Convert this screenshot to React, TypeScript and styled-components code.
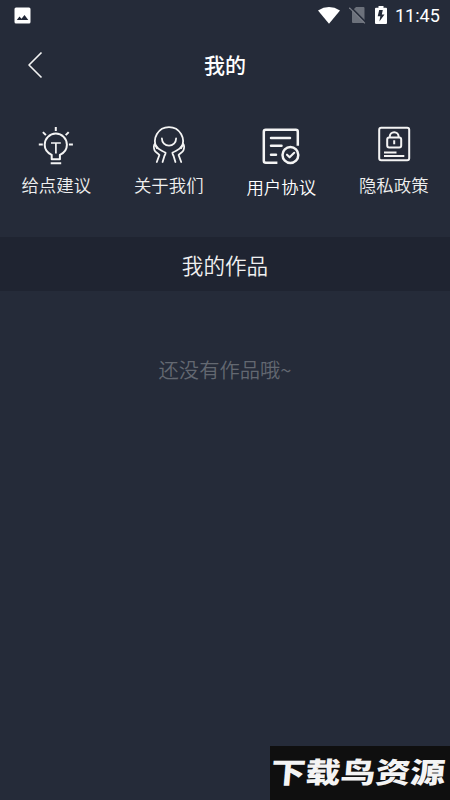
import React from "react";
import styled, { createGlobalStyle } from "styled-components";

const GlobalStyle = createGlobalStyle`
  * { box-sizing: border-box; }
  body { margin: 0; background: #252b39; }
`;

const Screen = styled.main`
  position: relative;
  display: flex;
  flex-direction: column;
  width: 450px;
  height: 800px;
  overflow: hidden;
  background: #252b39;
  color: #f0f0f0;
  font-family: "Noto Sans CJK SC", sans-serif;
`;

const StatusBar = styled.div`
  display: flex;
  align-items: center;
  justify-content: space-between;
  height: 30px;
  padding: 0 10px 0 14px;
  svg { display: block; }
`;

const StatusGroup = styled.div`
  display: flex;
  align-items: center;
`;

const StatusIcons = styled.div`
  display: flex;
  align-items: center;
  gap: 9px;
`;

const Clock = styled.span`
  margin-left: 8px;
  width: 45px;
  color: #fff;
  font: 450 18px/30px Roboto, sans-serif;
  white-space: nowrap;
  padding-top: 1px;
`;

const Header = styled.header`
  display: grid;
  grid-template-columns: 70px 1fr 70px;
  align-items: center;
  height: 70px;
`;

const BackButton = styled.button`
  display: flex;
  padding: 0 0 0 27px;
  border: 0;
  background: none;
`;

const Title = styled.h1`
  margin: 0 0 2px;
  color: #fff;
  font-size: 21px;
  font-weight: 500;
  line-height: 30px;
  text-align: center;
`;

const Menu = styled.nav`
  display: grid;
  grid-template-columns: repeat(4, 1fr);
  height: 137px;
  padding-top: 24px;
`;

const MenuItem = styled.a<{ $gap: number; $strong?: boolean }>`
  display: flex;
  flex-direction: column;
  align-items: center;
  gap: ${(p) => p.$gap}px;
  color: ${(p) => (p.$strong ? "#ffffff" : "#efefef")};
  font-size: 17.4px;
  font-weight: 350;
  line-height: 24px;
  white-space: nowrap;
  svg { display: block; }
`;

const SectionTitle = styled.h2`
  margin: 0;
  height: 54px;
  background: #1f2431;
  color: #f0f0f0;
  font-size: 21.6px;
  font-weight: 350;
  line-height: 55px;
  text-align: center;
`;

const Empty = styled.p`
  margin: 63px 0 0;
  color: #636871;
  font-size: 20.3px;
  font-weight: 350;
  line-height: 30px;
  text-align: center;
`;

const Watermark = styled.div`
  position: absolute;
  right: 0;
  bottom: 0;
  width: 180px;
  height: 54px;
  background: #0f0f0f;
`;

const WatermarkText = styled.span`
  display: block;
  width: 150px;
  margin-left: 1px;
  color: #f4f4f4;
  font-size: 28.6px;
  font-weight: 900;
  line-height: 50px;
  white-space: nowrap;
  transform: scaleX(1.22) skewX(-4deg);
  transform-origin: 0 50%;
`;

const Line = styled.svg`
  fill: none;
  stroke: #f4f4f4;
  stroke-width: 2;
  stroke-linejoin: round;
`;

const PictureIcon = () => (
  <svg width="17" height="17" viewBox="0 0 17 17">
    <rect x="0.5" y="0.5" width="16" height="16" rx="1.5" fill="#fff" />
    <path d="M2.8 13 5.5 9.4l2 2.3L10.5 8l3.8 5Z" fill="#202636" />
  </svg>
);

const WifiIcon = () => (
  <svg width="22" height="17" viewBox="0 0 22 17">
    <path d="M0 3.5Q11-3.3 22 3.5L11 16.8Z" fill="#fff" />
  </svg>
);

const NoSimIcon = () => (
  <svg width="17" height="18" viewBox="0 0 17 18">
    <path d="M7 1h7.5q1 0 1 1v14q0 1-1 1H4q-1 0-1-1V5Z" fill="#6c717b" />
    <path d="m1.2.5 16 16.2" stroke="#252b39" strokeWidth="1.6" />
    <path d="m.3 1.6 15.6 15.8" stroke="#777b84" strokeWidth="1.3" />
  </svg>
);

const BatteryIcon = () => (
  <svg width="12" height="18" viewBox="0 0 12 18">
    <path d="M3.5 0h5v1.8H11q1 0 1 1V17q0 1-1 1H1q-1 0-1-1V2.8q0-1 1-1h2.5Z" fill="#fff" />
    <path d="M7.8 4H4.2L2.7 10.2h2.6L4.4 15.6 9.5 8.4H6.8Z" fill="#252b39" />
  </svg>
);

const BulbIcon = () => (
  <Line width="38" height="42" viewBox="0 0 38 42">
    <path d="M14.7 35.2v-4.4C10.5 28.9 7.7 25.6 7.7 20.7a11.1 11.1 0 0 1 22.2 0c0 4.9-2.8 8.2-7 10.1v4.4Z" />
    <path d="M13.7 39.2h10.5M18.8 3v4M1.8 20.5h4M31.9 20.5h4M5.9 8.1l3 3M31.7 8.1l-3 3" />
    <path d="M14 19h9.8M18.9 19v10.5" strokeWidth="1.7" />
  </Line>
);

const HandsIcon = () => (
  <Line width="38" height="42" viewBox="0 0 38 42">
    <g strokeWidth="1.8" strokeLinecap="round">
      <path d="M6.8 24A14 14 0 1 1 31.2 24" />
      <path d="M11.9 14.5a7.1 7.1 0 0 0 14.2 0" />
      <path d="M5 19.6Q3.1 22 4.4 26C5.2 28.5 8 29 9.4 31L6.8 38M5.8 21.5C8 26 11.5 26 15.6 28.8Q15.4 30.2 14.4 32L12.6 38" />
      <path d="M33 19.6Q34.9 22 33.6 26C32.8 28.5 30 29 28.6 31L31.2 38M32.2 21.5C30 26 26.5 26 22.4 28.8Q22.6 30.2 23.6 32L25.4 38" />
    </g>
  </Line>
);

const AgreementIcon = () => (
  <Line width="38" height="42" viewBox="0 0 38 42">
    <g strokeWidth="2.5">
      <path d="M15.4 38.7H3.8q-2 0-2-2V7.7q0-2 2-2h30q2 0 2 2v14" />
      <path d="M9 14h19M9 21.8h10.5M9 30.7h5" strokeLinecap="round" />
      <circle cx="28.4" cy="31" r="7.9" />
      <path d="m25 30.7 2.6 2.6 4.6-4.5" strokeLinecap="round" strokeWidth="2.1" />
    </g>
  </Line>
);

const PrivacyIcon = () => (
  <Line width="38" height="42" viewBox="0 0 38 42">
    <rect x="4.2" y="3.7" width="30" height="32.6" rx="2" />
    <rect x="12.2" y="13.4" width="14" height="10" rx="2" />
    <path d="M14.8 13.4v-.8a4.4 4.4 0 0 1 8.8 0v.8M19.2 16.2v4M9 28.6h12.5M9 32h20.3" />
  </Line>
);

const BackIcon = () => (
  <Line width="16" height="28" viewBox="0 0 16 28">
    <path d="M14.5 1.5 2 14l12.5 12.5" strokeWidth="1.6" />
  </Line>
);

const items = [
  { label: "给点建议", icon: <BulbIcon />, gap: 7 },
  { label: "关于我们", icon: <HandsIcon />, gap: 7 },
  { label: "用户协议", icon: <AgreementIcon />, gap: 9, strong: true },
  { label: "隐私政策", icon: <PrivacyIcon />, gap: 7 },
];

export default function App() {
  return (
    <Screen>
      <GlobalStyle />
      <StatusBar>
        <PictureIcon />
        <StatusGroup>
          <StatusIcons>
            <WifiIcon />
            <NoSimIcon />
            <BatteryIcon />
          </StatusIcons>
          <Clock>11:45</Clock>
        </StatusGroup>
      </StatusBar>
      <Header>
        <BackButton aria-label="返回"><BackIcon /></BackButton>
        <Title>我的</Title>
      </Header>
      <Menu>
        {items.map(({ label, icon, gap, strong }) => (
          <MenuItem key={label} $gap={gap} $strong={strong}>
            {icon}
            <span>{label}</span>
          </MenuItem>
        ))}
      </Menu>
      <SectionTitle>我的作品</SectionTitle>
      <Empty>还没有作品哦~</Empty>
      <Watermark><WatermarkText>下载鸟资源</WatermarkText></Watermark>
    </Screen>
  );
}
